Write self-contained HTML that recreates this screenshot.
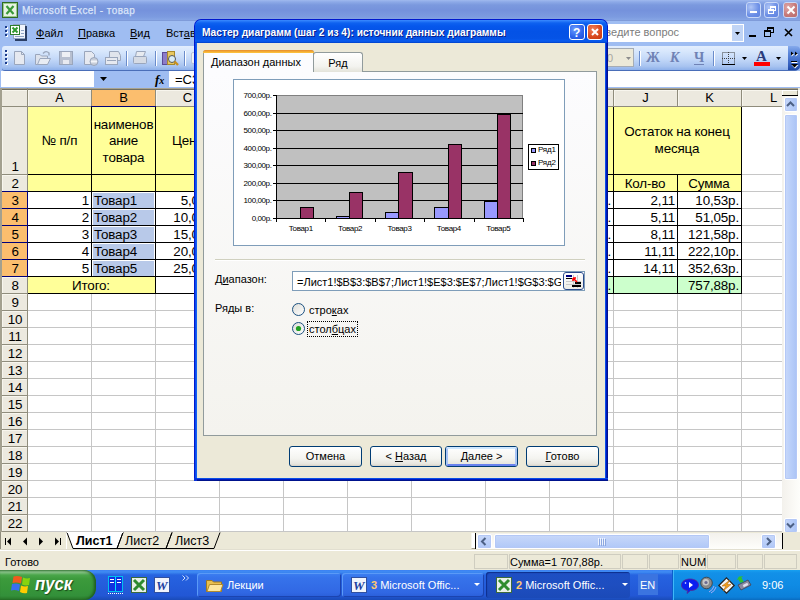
<!DOCTYPE html>
<html><head><meta charset="utf-8">
<style>
*{margin:0;padding:0;box-sizing:border-box}
html,body{width:800px;height:600px;overflow:hidden;background:#ECE9D8;font-family:"Liberation Sans",sans-serif}
.a{position:absolute}
.t{position:absolute;white-space:nowrap;line-height:1}
svg{position:absolute;overflow:visible}
</style></head><body>
<div class="a" style="left:0px;top:0px;width:800px;height:21px;background:linear-gradient(#A0BAEE 0,#8CA9E7 2px,#7B99DE 5px,#7592DC 50%,#7C9BE0 80%,#86A5E5 95%,#6F8AD6 100%)"></div>
<div class="t" style="left:22px;top:5.54px;font-size:10px;color:#DCE6FA;letter-spacing:0.45px;-webkit-text-stroke:0.25px #DCE6FA">Microsoft Excel - товар</div>
<div class="a" style="left:0px;top:20px;width:800px;height:68px;background:#9FBDF2"></div>
<div class="a" style="left:0px;top:20px;width:800px;height:1px;background:#7F9BD9"></div>
<div class="a" style="left:746px;top:2px;width:15px;height:16px;border:1px solid #C8D8F8;border-radius:3px;background:radial-gradient(circle at 30% 30%,#B0C6F6,#6C8FE6 60%,#5D82E0)"></div>
<div class="a" style="left:764px;top:2px;width:15px;height:16px;border:1px solid #C8D8F8;border-radius:3px;background:radial-gradient(circle at 30% 30%,#B0C6F6,#6C8FE6 60%,#5D82E0)"></div>
<div class="a" style="left:783px;top:2px;width:15px;height:16px;border:1px solid #C8D8F8;border-radius:3px;background:radial-gradient(circle at 30% 30%,#E0A8A8,#C57878 60%,#B86C6C)"></div>
<div class="a" style="left:750px;top:11px;width:7px;height:2px;background:#fff"></div>
<svg style="left:767px;top:5px" width="10" height="10"><rect x="3.5" y="1.5" width="5" height="4" fill="none" stroke="#fff"/><rect x="1.5" y="4.5" width="5" height="4" fill="#7C9CE8" stroke="#fff"/><line x1="3" x2="9" y1="2" y2="2" stroke="#fff" stroke-width="2"/><line x1="1" x2="7" y1="5" y2="5" stroke="#fff" stroke-width="2"/></svg>
<svg style="left:786px;top:5px" width="10" height="10"><path d="M1.5 1.5L8.5 8.5M8.5 1.5L1.5 8.5" stroke="#fff" stroke-width="2"/></svg>
<svg style="left:2px;top:2px" width="17" height="17"><rect x="0.5" y="0.5" width="15" height="15" fill="#E8F2E4" stroke="#2F6A25"/><rect x="1.5" y="1.5" width="13" height="13" fill="none" stroke="#9ACB8A"/><path d="M4.5 4L11.5 12M11.5 4L4.5 12" stroke="#3A9A3A" stroke-width="2.2"/></svg>
<div class="a" style="left:5px;top:26px;width:2px;height:2px;background:#1B3C8C;box-shadow:1px 1px 0 #fff"></div>
<div class="a" style="left:5px;top:30px;width:2px;height:2px;background:#1B3C8C;box-shadow:1px 1px 0 #fff"></div>
<div class="a" style="left:5px;top:34px;width:2px;height:2px;background:#1B3C8C;box-shadow:1px 1px 0 #fff"></div>
<svg style="left:10px;top:24px" width="18" height="17"><rect x="3.5" y="0.5" width="12" height="14" fill="#F0F4FC" stroke="#8FA3C4"/><rect x="15" y="2" width="2" height="14" fill="#2B3E64"/><rect x="5" y="15" width="12" height="2" fill="#2B3E64"/><rect x="0.5" y="1.5" width="9" height="9" fill="#fff" stroke="#2E7D2E"/><path d="M2.5 3.5L7.5 8.5M7.5 3.5L2.5 8.5" stroke="#2E9A2E" stroke-width="2"/><line x1="11" x2="14" y1="6.5" y2="6.5" stroke="#8FA3C4"/><line x1="11" x2="14" y1="9.5" y2="9.5" stroke="#8FA3C4"/><line x1="5" x2="14" y1="12.5" y2="12.5" stroke="#8FA3C4"/></svg>
<div class="t" style="left:36px;top:27.69px;font-size:11px;color:#000"><u>Ф</u>айл</div>
<div class="t" style="left:78px;top:27.69px;font-size:11px;color:#000"><u>П</u>равка</div>
<div class="t" style="left:130px;top:27.69px;font-size:11px;color:#000"><u>В</u>ид</div>
<div class="t" style="left:166px;top:27.69px;font-size:11px;color:#000">Вст<u>а</u>вка</div>
<div class="a" style="left:560px;top:24px;width:184px;height:18px;background:#fff;border:1px solid #fff"></div>
<div class="a" style="left:732px;top:25px;width:11px;height:16px;background:#C1D5F6"></div>
<svg style="left:735px;top:32px" width="6" height="4"><path d="M0 0H5L2.5 3Z" fill="#000"/></svg>
<div class="t" style="left:598px;top:26.69px;font-size:11px;color:#7C7C7C">Введите вопрос</div>
<div class="a" style="left:749px;top:35px;width:7px;height:2px;background:#000"></div>
<svg style="left:764px;top:27px" width="11" height="11"><rect x="3.5" y="0.5" width="6" height="5" fill="none" stroke="#000"/><line x1="3" x2="10" y1="1.5" y2="1.5" stroke="#000"/><rect x="0.5" y="3.5" width="6" height="6" fill="#A6C3F0" stroke="#000"/><line x1="0" x2="7" y1="4.5" y2="4.5" stroke="#000"/></svg>
<svg style="left:784px;top:28px" width="10" height="10"><path d="M1 1L8 8M8 1L1 8" stroke="#000" stroke-width="1.6"/></svg>
<div class="a" style="left:2px;top:46px;width:620px;height:24px;border-radius:3px 0 0 3px;background:linear-gradient(#E3EEFE 0,#D6E6FC 25%,#C3D8F8 55%,#A7C3F0 85%,#8DB0EA 100%);box-shadow:0 1px 0 #4A6EB8"></div>
<div class="a" style="left:600px;top:46px;width:198px;height:24px;border-radius:0 3px 3px 0;background:linear-gradient(#E3EEFE 0,#D6E6FC 25%,#C3D8F8 55%,#A7C3F0 85%,#8DB0EA 100%);box-shadow:0 1px 0 #4A6EB8"></div>
<div class="a" style="left:5px;top:50px;width:2px;height:2px;background:#1B3C8C;box-shadow:1px 1px 0 #fff"></div>
<div class="a" style="left:5px;top:54px;width:2px;height:2px;background:#1B3C8C;box-shadow:1px 1px 0 #fff"></div>
<div class="a" style="left:5px;top:58px;width:2px;height:2px;background:#1B3C8C;box-shadow:1px 1px 0 #fff"></div>
<div class="a" style="left:5px;top:62px;width:2px;height:2px;background:#1B3C8C;box-shadow:1px 1px 0 #fff"></div>
<svg style="left:13px;top:50px" width="14" height="16"><path d="M1.5 1.5H8.5L11.5 4.5V14.5H1.5Z" fill="#E6E9F0" stroke="#9AA6BC"/><path d="M8.5 1.5V4.5H11.5" fill="none" stroke="#9AA6BC"/></svg>
<svg style="left:34px;top:50px" width="18" height="16"><path d="M1.5 4.5H6L7.5 6H13.5V14.5H1.5Z" fill="#DDE2EC" stroke="#9AA6BC"/><path d="M3.5 14.5L6 8.5H16.5L13.5 14.5Z" fill="#E8ECF3" stroke="#9AA6BC"/><path d="M9 3.5Q12 0 15 3L15 5.5" fill="none" stroke="#9AA6BC" stroke-width="1.4"/></svg>
<svg style="left:58px;top:50px" width="16" height="16"><rect x="1.5" y="1.5" width="13" height="13" fill="#B8C0D0" stroke="#9AA6BC"/><rect x="4" y="2" width="8" height="5" fill="#EEF0F4"/><rect x="5" y="10" width="6" height="4" fill="#E8EAF0"/></svg>
<svg style="left:83px;top:50px" width="16" height="16"><path d="M1.5 1.5H8.5L11.5 4.5V14.5H1.5Z" fill="#E6E9F0" stroke="#9AA6BC"/><circle cx="11" cy="11.5" r="4" fill="#C8CED9" stroke="#9AA6BC"/><rect x="8" y="10.5" width="6" height="2" fill="#F2F4F8"/></svg>
<svg style="left:104px;top:50px" width="18" height="16"><path d="M5.5 1.5H14.5L16.5 5.5V10.5H5.5Z" fill="#E0E4EC" stroke="#9AA6BC"/><rect x="1.5" y="7.5" width="12" height="7" fill="#E6E9F0" stroke="#9AA6BC"/><line x1="3" x2="12" y1="10.5" y2="10.5" stroke="#9AA6BC"/></svg>
<div class="a" style="left:126px;top:51px;width:1px;height:15px;background:#6A8CCB;box-shadow:1px 0 0 #fff"></div>
<svg style="left:132px;top:50px" width="16" height="16"><path d="M4.5 1.5H13.5L11.5 6.5H3.5Z" fill="#E8EBF0" stroke="#9AA6BC"/><rect x="1.5" y="6.5" width="13" height="7" rx="1" fill="#D6DBE4" stroke="#9AA6BC"/></svg>
<div class="a" style="left:155px;top:51px;width:1px;height:15px;background:#6A8CCB;box-shadow:1px 0 0 #fff"></div>
<svg style="left:162px;top:50px" width="18" height="17"><rect x="0.5" y="2.5" width="5" height="12" fill="#8C7CC8" stroke="#5A4A98"/><rect x="5.5" y="1.5" width="7" height="13" fill="#E8C860" stroke="#A88A2C"/><circle cx="10" cy="9" r="3.5" fill="#D8ECF8" stroke="#555"/><path d="M12.5 11.5L16 15" stroke="#C89020" stroke-width="2.4"/></svg>
<div class="a" style="left:184px;top:51px;width:1px;height:15px;background:#6A8CCB;box-shadow:1px 0 0 #fff"></div>
<div class="a" style="left:191px;top:52px;width:6px;height:12px;border:1px solid #B8C2D4;border-radius:2px;background:linear-gradient(90deg,#F4F6FA,#DDE2EA)"></div>
<div class="a" style="left:600px;top:48px;width:34px;height:19px;background:#ECE9D8;border:1px solid #A5ACB5"></div>
<svg style="left:626px;top:57px" width="6" height="4"><path d="M0 0H5L2.5 3Z" fill="#8C8C8C"/></svg>
<div class="t" style="left:601px;top:52.69px;font-size:11px;color:#A8A8A0">10</div>
<div class="a" style="left:639px;top:51px;width:1px;height:15px;background:#6A8CCB;box-shadow:1px 0 0 #fff"></div>
<div class="t" style="left:646px;top:51px;font-family:'Liberation Serif',serif;font-size:14px;font-weight:bold;color:#6F82B5">Ж</div>
<div class="t" style="left:670px;top:51px;font-family:'Liberation Serif',serif;font-size:14px;font-weight:bold;font-style:italic;color:#6F82B5">К</div>
<div class="t" style="left:694px;top:51px;font-family:'Liberation Serif',serif;font-size:14px;font-weight:bold;color:#6F82B5">Ч</div>
<div class="a" style="left:694px;top:64px;width:10px;height:1px;background:#6F82B5"></div>
<div class="a" style="left:713px;top:51px;width:1px;height:15px;background:#6A8CCB;box-shadow:1px 0 0 #fff"></div>
<svg style="left:722px;top:52px" width="14" height="14"><g stroke="#404040" stroke-dasharray="1 1" fill="none"><rect x="0.5" y="0.5" width="12" height="12"/><line x1="6.5" x2="6.5" y1="0" y2="13"/><line x1="0" x2="13" y1="6.5" y2="6.5"/></g><line x1="0" x2="13" y1="12.5" y2="12.5" stroke="#000"/></svg>
<svg style="left:742px;top:57px" width="6" height="4"><path d="M0 0H5L2.5 3Z" fill="#000"/></svg>
<div class="t" style="left:756px;top:49px;font-family:'Liberation Serif',serif;font-size:15px;font-weight:bold;color:#2A3D7C">A</div>
<div class="a" style="left:754px;top:62px;width:16px;height:4px;background:#F00"></div>
<svg style="left:776px;top:57px" width="6" height="4"><path d="M0 0H5L2.5 3Z" fill="#000"/></svg>
<div class="a" style="left:788px;top:46px;width:12px;height:24px;border-radius:0 4px 4px 0;background:linear-gradient(#86AAEC,#5A86DA 30%,#3A66C4 70%,#1E48A6)"></div>
<svg style="left:790px;top:50px" width="10" height="18"><g fill="#fff"><path d="M1.5 2.5L4 4.5L1.5 6.5Z"/><path d="M5.5 2.5L8 4.5L5.5 6.5Z"/><rect x="1.5" y="12" width="6" height="1"/><path d="M1.5 15H8.5L5 18.5Z"/></g><g fill="#000"><path d="M1 1.5L3.5 3.5L1 5.5Z"/><path d="M5 1.5L7.5 3.5L5 5.5Z"/><rect x="1" y="11" width="6" height="1"/><path d="M1 14H8L4.5 17.5Z"/></g></svg>
<div class="a" style="left:1px;top:71px;width:93px;height:16px;background:#fff"></div>
<div class="t" style="left:2.0px;top:73px;width:90px;text-align:center;font-size:13px;color:#000">G3</div>
<svg style="left:100px;top:77px" width="8" height="5"><path d="M0 0H7L3.5 4Z" fill="#000"/></svg>
<div class="t" style="left:155px;top:73px;font-family:'Liberation Serif',serif;font-size:13px;font-style:italic;font-weight:bold;color:#000">f<span style="font-size:10px">x</span></div>
<div class="a" style="left:169px;top:71px;width:631px;height:16px;background:#fff"></div>
<div class="t" style="left:175px;top:73.0px;font-size:13px;color:#000">=C3</div>
<div class="a" style="left:0px;top:88px;width:798px;height:1px;background:#A9A38F"></div>
<div class="a" style="left:0px;top:89px;width:798px;height:1px;background:#716F62"></div>
<div class="a" style="left:0px;top:90px;width:782px;height:16px;background:#ECE9DF"></div>
<div class="a" style="left:0px;top:90px;width:782px;height:1px;background:#F8F6EE"></div>
<div class="a" style="left:0px;top:106px;width:782px;height:1px;background:#8F8C7C"></div>
<div class="a" style="left:28px;top:107px;width:754px;height:425px;background:#fff"></div>
<div class="a" style="left:91px;top:107px;width:1px;height:425px;background:#C6C6C6"></div>
<div class="a" style="left:155px;top:107px;width:1px;height:425px;background:#C6C6C6"></div>
<div class="a" style="left:219px;top:107px;width:1px;height:425px;background:#C6C6C6"></div>
<div class="a" style="left:283px;top:107px;width:1px;height:425px;background:#C6C6C6"></div>
<div class="a" style="left:347px;top:107px;width:1px;height:425px;background:#C6C6C6"></div>
<div class="a" style="left:411px;top:107px;width:1px;height:425px;background:#C6C6C6"></div>
<div class="a" style="left:485px;top:107px;width:1px;height:425px;background:#C6C6C6"></div>
<div class="a" style="left:549px;top:107px;width:1px;height:425px;background:#C6C6C6"></div>
<div class="a" style="left:613px;top:107px;width:1px;height:425px;background:#C6C6C6"></div>
<div class="a" style="left:677px;top:107px;width:1px;height:425px;background:#C6C6C6"></div>
<div class="a" style="left:741px;top:107px;width:1px;height:425px;background:#C6C6C6"></div>
<div class="a" style="left:28px;top:174px;width:754px;height:1px;background:#C6C6C6"></div>
<div class="a" style="left:28px;top:191px;width:754px;height:1px;background:#C6C6C6"></div>
<div class="a" style="left:28px;top:208px;width:754px;height:1px;background:#C6C6C6"></div>
<div class="a" style="left:28px;top:225px;width:754px;height:1px;background:#C6C6C6"></div>
<div class="a" style="left:28px;top:242px;width:754px;height:1px;background:#C6C6C6"></div>
<div class="a" style="left:28px;top:259px;width:754px;height:1px;background:#C6C6C6"></div>
<div class="a" style="left:28px;top:276px;width:754px;height:1px;background:#C6C6C6"></div>
<div class="a" style="left:28px;top:293px;width:754px;height:1px;background:#C6C6C6"></div>
<div class="a" style="left:28px;top:310px;width:754px;height:1px;background:#C6C6C6"></div>
<div class="a" style="left:28px;top:327px;width:754px;height:1px;background:#C6C6C6"></div>
<div class="a" style="left:28px;top:344px;width:754px;height:1px;background:#C6C6C6"></div>
<div class="a" style="left:28px;top:361px;width:754px;height:1px;background:#C6C6C6"></div>
<div class="a" style="left:28px;top:378px;width:754px;height:1px;background:#C6C6C6"></div>
<div class="a" style="left:28px;top:395px;width:754px;height:1px;background:#C6C6C6"></div>
<div class="a" style="left:28px;top:412px;width:754px;height:1px;background:#C6C6C6"></div>
<div class="a" style="left:28px;top:429px;width:754px;height:1px;background:#C6C6C6"></div>
<div class="a" style="left:28px;top:446px;width:754px;height:1px;background:#C6C6C6"></div>
<div class="a" style="left:28px;top:463px;width:754px;height:1px;background:#C6C6C6"></div>
<div class="a" style="left:28px;top:480px;width:754px;height:1px;background:#C6C6C6"></div>
<div class="a" style="left:28px;top:497px;width:754px;height:1px;background:#C6C6C6"></div>
<div class="a" style="left:28px;top:514px;width:754px;height:1px;background:#C6C6C6"></div>
<div class="a" style="left:28px;top:531px;width:754px;height:1px;background:#C6C6C6"></div>
<div class="a" style="left:1px;top:107px;width:26px;height:425px;background:#ECE9DF"></div>
<div class="a" style="left:2px;top:107px;width:1px;height:425px;background:#F8F6EE"></div>
<div class="a" style="left:0px;top:88px;width:2px;height:444px;background:#A3A08F"></div>
<div class="a" style="left:27px;top:88px;width:1px;height:444px;background:#8F8C7C"></div>
<div class="a" style="left:2px;top:174px;width:25px;height:1px;background:#8F8C7C"></div>
<div class="a" style="left:3px;top:175px;width:24px;height:1px;background:#F8F6EE"></div>
<div class="a" style="left:2px;top:191px;width:25px;height:1px;background:#8F8C7C"></div>
<div class="a" style="left:3px;top:192px;width:24px;height:1px;background:#F8F6EE"></div>
<div class="a" style="left:2px;top:208px;width:25px;height:1px;background:#8F8C7C"></div>
<div class="a" style="left:3px;top:209px;width:24px;height:1px;background:#F8F6EE"></div>
<div class="a" style="left:2px;top:225px;width:25px;height:1px;background:#8F8C7C"></div>
<div class="a" style="left:3px;top:226px;width:24px;height:1px;background:#F8F6EE"></div>
<div class="a" style="left:2px;top:242px;width:25px;height:1px;background:#8F8C7C"></div>
<div class="a" style="left:3px;top:243px;width:24px;height:1px;background:#F8F6EE"></div>
<div class="a" style="left:2px;top:259px;width:25px;height:1px;background:#8F8C7C"></div>
<div class="a" style="left:3px;top:260px;width:24px;height:1px;background:#F8F6EE"></div>
<div class="a" style="left:2px;top:276px;width:25px;height:1px;background:#8F8C7C"></div>
<div class="a" style="left:3px;top:277px;width:24px;height:1px;background:#F8F6EE"></div>
<div class="a" style="left:2px;top:293px;width:25px;height:1px;background:#8F8C7C"></div>
<div class="a" style="left:3px;top:294px;width:24px;height:1px;background:#F8F6EE"></div>
<div class="a" style="left:2px;top:310px;width:25px;height:1px;background:#8F8C7C"></div>
<div class="a" style="left:3px;top:311px;width:24px;height:1px;background:#F8F6EE"></div>
<div class="a" style="left:2px;top:327px;width:25px;height:1px;background:#8F8C7C"></div>
<div class="a" style="left:3px;top:328px;width:24px;height:1px;background:#F8F6EE"></div>
<div class="a" style="left:2px;top:344px;width:25px;height:1px;background:#8F8C7C"></div>
<div class="a" style="left:3px;top:345px;width:24px;height:1px;background:#F8F6EE"></div>
<div class="a" style="left:2px;top:361px;width:25px;height:1px;background:#8F8C7C"></div>
<div class="a" style="left:3px;top:362px;width:24px;height:1px;background:#F8F6EE"></div>
<div class="a" style="left:2px;top:378px;width:25px;height:1px;background:#8F8C7C"></div>
<div class="a" style="left:3px;top:379px;width:24px;height:1px;background:#F8F6EE"></div>
<div class="a" style="left:2px;top:395px;width:25px;height:1px;background:#8F8C7C"></div>
<div class="a" style="left:3px;top:396px;width:24px;height:1px;background:#F8F6EE"></div>
<div class="a" style="left:2px;top:412px;width:25px;height:1px;background:#8F8C7C"></div>
<div class="a" style="left:3px;top:413px;width:24px;height:1px;background:#F8F6EE"></div>
<div class="a" style="left:2px;top:429px;width:25px;height:1px;background:#8F8C7C"></div>
<div class="a" style="left:3px;top:430px;width:24px;height:1px;background:#F8F6EE"></div>
<div class="a" style="left:2px;top:446px;width:25px;height:1px;background:#8F8C7C"></div>
<div class="a" style="left:3px;top:447px;width:24px;height:1px;background:#F8F6EE"></div>
<div class="a" style="left:2px;top:463px;width:25px;height:1px;background:#8F8C7C"></div>
<div class="a" style="left:3px;top:464px;width:24px;height:1px;background:#F8F6EE"></div>
<div class="a" style="left:2px;top:480px;width:25px;height:1px;background:#8F8C7C"></div>
<div class="a" style="left:3px;top:481px;width:24px;height:1px;background:#F8F6EE"></div>
<div class="a" style="left:2px;top:497px;width:25px;height:1px;background:#8F8C7C"></div>
<div class="a" style="left:3px;top:498px;width:24px;height:1px;background:#F8F6EE"></div>
<div class="a" style="left:2px;top:514px;width:25px;height:1px;background:#8F8C7C"></div>
<div class="a" style="left:3px;top:515px;width:24px;height:1px;background:#F8F6EE"></div>
<div class="a" style="left:2px;top:531px;width:25px;height:1px;background:#8F8C7C"></div>
<div class="a" style="left:3px;top:532px;width:24px;height:1px;background:#F8F6EE"></div>
<div class="a" style="left:27px;top:90px;width:1px;height:16px;background:#8F8C7C"></div>
<div class="a" style="left:28px;top:91px;width:1px;height:15px;background:#F8F6EE"></div>
<div class="a" style="left:91px;top:90px;width:1px;height:16px;background:#8F8C7C"></div>
<div class="a" style="left:92px;top:91px;width:1px;height:15px;background:#F8F6EE"></div>
<div class="a" style="left:155px;top:90px;width:1px;height:16px;background:#8F8C7C"></div>
<div class="a" style="left:156px;top:91px;width:1px;height:15px;background:#F8F6EE"></div>
<div class="a" style="left:219px;top:90px;width:1px;height:16px;background:#8F8C7C"></div>
<div class="a" style="left:220px;top:91px;width:1px;height:15px;background:#F8F6EE"></div>
<div class="a" style="left:283px;top:90px;width:1px;height:16px;background:#8F8C7C"></div>
<div class="a" style="left:284px;top:91px;width:1px;height:15px;background:#F8F6EE"></div>
<div class="a" style="left:347px;top:90px;width:1px;height:16px;background:#8F8C7C"></div>
<div class="a" style="left:348px;top:91px;width:1px;height:15px;background:#F8F6EE"></div>
<div class="a" style="left:411px;top:90px;width:1px;height:16px;background:#8F8C7C"></div>
<div class="a" style="left:412px;top:91px;width:1px;height:15px;background:#F8F6EE"></div>
<div class="a" style="left:485px;top:90px;width:1px;height:16px;background:#8F8C7C"></div>
<div class="a" style="left:486px;top:91px;width:1px;height:15px;background:#F8F6EE"></div>
<div class="a" style="left:549px;top:90px;width:1px;height:16px;background:#8F8C7C"></div>
<div class="a" style="left:550px;top:91px;width:1px;height:15px;background:#F8F6EE"></div>
<div class="a" style="left:613px;top:90px;width:1px;height:16px;background:#8F8C7C"></div>
<div class="a" style="left:614px;top:91px;width:1px;height:15px;background:#F8F6EE"></div>
<div class="a" style="left:677px;top:90px;width:1px;height:16px;background:#8F8C7C"></div>
<div class="a" style="left:678px;top:91px;width:1px;height:15px;background:#F8F6EE"></div>
<div class="a" style="left:741px;top:90px;width:1px;height:16px;background:#8F8C7C"></div>
<div class="a" style="left:742px;top:91px;width:1px;height:15px;background:#F8F6EE"></div>
<div class="t" style="left:-40.5px;top:91px;width:200px;text-align:center;font-size:13px;color:#000">A</div>
<div class="a" style="left:92px;top:90px;width:63px;height:16px;background:#FBBE6E"></div>
<div class="a" style="left:91px;top:106px;width:65px;height:1px;background:#00007A"></div>
<div class="t" style="left:23.5px;top:91px;width:200px;text-align:center;font-size:13px;color:#000">B</div>
<div class="t" style="left:87.5px;top:91px;width:200px;text-align:center;font-size:13px;color:#000">C</div>
<div class="t" style="left:151.5px;top:91px;width:200px;text-align:center;font-size:13px;color:#000">D</div>
<div class="t" style="left:215.5px;top:91px;width:200px;text-align:center;font-size:13px;color:#000">E</div>
<div class="t" style="left:279.5px;top:91px;width:200px;text-align:center;font-size:13px;color:#000">F</div>
<div class="t" style="left:348.5px;top:91px;width:200px;text-align:center;font-size:13px;color:#000">G</div>
<div class="t" style="left:417.5px;top:91px;width:200px;text-align:center;font-size:13px;color:#000">H</div>
<div class="t" style="left:481.5px;top:91px;width:200px;text-align:center;font-size:13px;color:#000">I</div>
<div class="t" style="left:545.5px;top:91px;width:200px;text-align:center;font-size:13px;color:#000">J</div>
<div class="t" style="left:609.5px;top:91px;width:200px;text-align:center;font-size:13px;color:#000">K</div>
<div class="t" style="left:673.5px;top:91px;width:200px;text-align:center;font-size:13px;color:#000">L</div>
<div class="t" style="left:2.0px;top:160px;width:26px;text-align:center;font-size:13.4px;color:#000;letter-spacing:-0.2px">1</div>
<div class="t" style="left:2.0px;top:177px;width:26px;text-align:center;font-size:13.4px;color:#000;letter-spacing:-0.2px">2</div>
<div class="a" style="left:2px;top:192px;width:25px;height:16px;background:#FBBE6E"></div>
<div class="t" style="left:2.0px;top:194px;width:26px;text-align:center;font-size:13.4px;color:#000;letter-spacing:-0.2px">3</div>
<div class="a" style="left:2px;top:209px;width:25px;height:16px;background:#FBBE6E"></div>
<div class="t" style="left:2.0px;top:211px;width:26px;text-align:center;font-size:13.4px;color:#000;letter-spacing:-0.2px">4</div>
<div class="a" style="left:2px;top:226px;width:25px;height:16px;background:#FBBE6E"></div>
<div class="t" style="left:2.0px;top:228px;width:26px;text-align:center;font-size:13.4px;color:#000;letter-spacing:-0.2px">5</div>
<div class="a" style="left:2px;top:243px;width:25px;height:16px;background:#FBBE6E"></div>
<div class="t" style="left:2.0px;top:245px;width:26px;text-align:center;font-size:13.4px;color:#000;letter-spacing:-0.2px">6</div>
<div class="a" style="left:2px;top:260px;width:25px;height:16px;background:#FBBE6E"></div>
<div class="t" style="left:2.0px;top:262px;width:26px;text-align:center;font-size:13.4px;color:#000;letter-spacing:-0.2px">7</div>
<div class="t" style="left:2.0px;top:279px;width:26px;text-align:center;font-size:13.4px;color:#000;letter-spacing:-0.2px">8</div>
<div class="t" style="left:2.0px;top:296px;width:26px;text-align:center;font-size:13.4px;color:#000;letter-spacing:-0.2px">9</div>
<div class="t" style="left:2.0px;top:313px;width:26px;text-align:center;font-size:13.4px;color:#000;letter-spacing:-0.2px">10</div>
<div class="t" style="left:2.0px;top:330px;width:26px;text-align:center;font-size:13.4px;color:#000;letter-spacing:-0.2px">11</div>
<div class="t" style="left:2.0px;top:347px;width:26px;text-align:center;font-size:13.4px;color:#000;letter-spacing:-0.2px">12</div>
<div class="t" style="left:2.0px;top:364px;width:26px;text-align:center;font-size:13.4px;color:#000;letter-spacing:-0.2px">13</div>
<div class="t" style="left:2.0px;top:381px;width:26px;text-align:center;font-size:13.4px;color:#000;letter-spacing:-0.2px">14</div>
<div class="t" style="left:2.0px;top:398px;width:26px;text-align:center;font-size:13.4px;color:#000;letter-spacing:-0.2px">15</div>
<div class="t" style="left:2.0px;top:415px;width:26px;text-align:center;font-size:13.4px;color:#000;letter-spacing:-0.2px">16</div>
<div class="t" style="left:2.0px;top:432px;width:26px;text-align:center;font-size:13.4px;color:#000;letter-spacing:-0.2px">17</div>
<div class="t" style="left:2.0px;top:449px;width:26px;text-align:center;font-size:13.4px;color:#000;letter-spacing:-0.2px">18</div>
<div class="t" style="left:2.0px;top:466px;width:26px;text-align:center;font-size:13.4px;color:#000;letter-spacing:-0.2px">19</div>
<div class="t" style="left:2.0px;top:483px;width:26px;text-align:center;font-size:13.4px;color:#000;letter-spacing:-0.2px">20</div>
<div class="t" style="left:2.0px;top:500px;width:26px;text-align:center;font-size:13.4px;color:#000;letter-spacing:-0.2px">21</div>
<div class="t" style="left:2.0px;top:517px;width:26px;text-align:center;font-size:13.4px;color:#000;letter-spacing:-0.2px">22</div>
<div class="a" style="left:27px;top:191px;width:1px;height:86px;background:#00007A"></div>
<div class="a" style="left:2px;top:191px;width:26px;height:1px;background:#00007A"></div>
<div class="a" style="left:2px;top:208px;width:26px;height:1px;background:#00007A"></div>
<div class="a" style="left:2px;top:225px;width:26px;height:1px;background:#00007A"></div>
<div class="a" style="left:2px;top:242px;width:26px;height:1px;background:#00007A"></div>
<div class="a" style="left:2px;top:259px;width:26px;height:1px;background:#00007A"></div>
<div class="a" style="left:2px;top:276px;width:26px;height:1px;background:#00007A"></div>
<div class="a" style="left:28px;top:107px;width:713px;height:67px;background:#FFFF99"></div>
<div class="a" style="left:28px;top:175px;width:713px;height:16px;background:#FFFF99"></div>
<div class="a" style="left:28px;top:277px;width:127px;height:16px;background:#FFFF99"></div>
<div class="a" style="left:613px;top:277px;width:128px;height:16px;background:#CCFFCC"></div>
<div class="a" style="left:608px;top:277px;width:5px;height:16px;background:#CCFFCC"></div>
<div class="a" style="left:93px;top:193px;width:61px;height:15px;background:#B8C9E9"></div>
<div class="a" style="left:93px;top:210px;width:61px;height:15px;background:#B8C9E9"></div>
<div class="a" style="left:93px;top:227px;width:61px;height:15px;background:#B8C9E9"></div>
<div class="a" style="left:93px;top:244px;width:61px;height:15px;background:#B8C9E9"></div>
<div class="a" style="left:93px;top:261px;width:61px;height:15px;background:#B8C9E9"></div>
<div class="a" style="left:28px;top:174px;width:713px;height:1px;background:#000"></div>
<div class="a" style="left:28px;top:191px;width:713px;height:1px;background:#000"></div>
<div class="a" style="left:28px;top:208px;width:713px;height:1px;background:#000"></div>
<div class="a" style="left:28px;top:225px;width:713px;height:1px;background:#000"></div>
<div class="a" style="left:28px;top:242px;width:713px;height:1px;background:#000"></div>
<div class="a" style="left:28px;top:259px;width:713px;height:1px;background:#000"></div>
<div class="a" style="left:28px;top:276px;width:713px;height:1px;background:#000"></div>
<div class="a" style="left:28px;top:293px;width:713px;height:1px;background:#000"></div>
<div class="a" style="left:91px;top:107px;width:1px;height:170px;background:#000"></div>
<div class="a" style="left:155px;top:107px;width:1px;height:187px;background:#000"></div>
<div class="a" style="left:613px;top:107px;width:1px;height:187px;background:#000"></div>
<div class="a" style="left:677px;top:175px;width:1px;height:119px;background:#000"></div>
<div class="a" style="left:741px;top:107px;width:1px;height:187px;background:#000"></div>
<div class="t" style="left:-40.5px;top:134px;width:200px;text-align:center;font-size:13.4px;color:#000;letter-spacing:-0.15px">№ п/п</div>
<div class="t" style="left:23.5px;top:117.5px;width:200px;text-align:center;font-size:13.4px;color:#000;letter-spacing:-0.15px">наименов</div>
<div class="t" style="left:23.5px;top:134px;width:200px;text-align:center;font-size:13.4px;color:#000;letter-spacing:-0.15px">ание</div>
<div class="t" style="left:23.5px;top:150.5px;width:200px;text-align:center;font-size:13.4px;color:#000;letter-spacing:-0.15px">товара</div>
<div class="t" style="left:172px;top:134px;font-size:13.4px;color:#000;letter-spacing:-0.15px">Цена</div>
<div class="t" style="left:-111px;top:194px;width:200px;text-align:right;font-size:13.4px;color:#000;letter-spacing:-0.15px">1</div>
<div class="t" style="left:94px;top:194px;font-size:13.4px;color:#000;letter-spacing:-0.15px">Товар1</div>
<div class="t" style="left:17px;top:194px;width:200px;text-align:right;font-size:13.4px;color:#000;letter-spacing:-0.15px">5,00р.</div>
<div class="t" style="left:475px;top:194px;width:200px;text-align:right;font-size:13.4px;color:#000;letter-spacing:-0.15px">2,11</div>
<div class="t" style="left:539px;top:194px;width:200px;text-align:right;font-size:13.4px;color:#000;letter-spacing:-0.15px">10,53р.</div>
<div class="t" style="left:-111px;top:211px;width:200px;text-align:right;font-size:13.4px;color:#000;letter-spacing:-0.15px">2</div>
<div class="t" style="left:94px;top:211px;font-size:13.4px;color:#000;letter-spacing:-0.15px">Товар2</div>
<div class="t" style="left:17px;top:211px;width:200px;text-align:right;font-size:13.4px;color:#000;letter-spacing:-0.15px">10,00р.</div>
<div class="t" style="left:475px;top:211px;width:200px;text-align:right;font-size:13.4px;color:#000;letter-spacing:-0.15px">5,11</div>
<div class="t" style="left:539px;top:211px;width:200px;text-align:right;font-size:13.4px;color:#000;letter-spacing:-0.15px">51,05р.</div>
<div class="t" style="left:-111px;top:228px;width:200px;text-align:right;font-size:13.4px;color:#000;letter-spacing:-0.15px">3</div>
<div class="t" style="left:94px;top:228px;font-size:13.4px;color:#000;letter-spacing:-0.15px">Товар3</div>
<div class="t" style="left:17px;top:228px;width:200px;text-align:right;font-size:13.4px;color:#000;letter-spacing:-0.15px">15,00р.</div>
<div class="t" style="left:475px;top:228px;width:200px;text-align:right;font-size:13.4px;color:#000;letter-spacing:-0.15px">8,11</div>
<div class="t" style="left:539px;top:228px;width:200px;text-align:right;font-size:13.4px;color:#000;letter-spacing:-0.15px">121,58р.</div>
<div class="t" style="left:-111px;top:245px;width:200px;text-align:right;font-size:13.4px;color:#000;letter-spacing:-0.15px">4</div>
<div class="t" style="left:94px;top:245px;font-size:13.4px;color:#000;letter-spacing:-0.15px">Товар4</div>
<div class="t" style="left:17px;top:245px;width:200px;text-align:right;font-size:13.4px;color:#000;letter-spacing:-0.15px">20,00р.</div>
<div class="t" style="left:475px;top:245px;width:200px;text-align:right;font-size:13.4px;color:#000;letter-spacing:-0.15px">11,11</div>
<div class="t" style="left:539px;top:245px;width:200px;text-align:right;font-size:13.4px;color:#000;letter-spacing:-0.15px">222,10р.</div>
<div class="t" style="left:-111px;top:262px;width:200px;text-align:right;font-size:13.4px;color:#000;letter-spacing:-0.15px">5</div>
<div class="t" style="left:94px;top:262px;font-size:13.4px;color:#000;letter-spacing:-0.15px">Товар5</div>
<div class="t" style="left:17px;top:262px;width:200px;text-align:right;font-size:13.4px;color:#000;letter-spacing:-0.15px">25,00р.</div>
<div class="t" style="left:475px;top:262px;width:200px;text-align:right;font-size:13.4px;color:#000;letter-spacing:-0.15px">14,11</div>
<div class="t" style="left:539px;top:262px;width:200px;text-align:right;font-size:13.4px;color:#000;letter-spacing:-0.15px">352,63р.</div>
<div class="t" style="left:-9.0px;top:279px;width:200px;text-align:center;font-size:13.4px;color:#000;letter-spacing:-0.15px">Итого:</div>
<div class="t" style="left:411px;top:194px;width:200px;text-align:right;font-size:13.4px;color:#000;letter-spacing:-0.15px">р.</div>
<div class="t" style="left:411px;top:211px;width:200px;text-align:right;font-size:13.4px;color:#000;letter-spacing:-0.15px">р.</div>
<div class="t" style="left:411px;top:228px;width:200px;text-align:right;font-size:13.4px;color:#000;letter-spacing:-0.15px">р.</div>
<div class="t" style="left:411px;top:245px;width:200px;text-align:right;font-size:13.4px;color:#000;letter-spacing:-0.15px">р.</div>
<div class="t" style="left:411px;top:262px;width:200px;text-align:right;font-size:13.4px;color:#000;letter-spacing:-0.15px">р.</div>
<div class="t" style="left:411px;top:279px;width:200px;text-align:right;font-size:13.4px;color:#000;letter-spacing:-0.15px">р.</div>
<div class="t" style="left:539px;top:279px;width:200px;text-align:right;font-size:13.4px;color:#000;letter-spacing:-0.15px">757,88р.</div>
<div class="t" style="left:577.0px;top:125px;width:200px;text-align:center;font-size:13.4px;color:#000;letter-spacing:-0.15px">Остаток на конец</div>
<div class="t" style="left:577.0px;top:141.5px;width:200px;text-align:center;font-size:13.4px;color:#000;letter-spacing:-0.15px">месяца</div>
<div class="t" style="left:545.0px;top:177px;width:200px;text-align:center;font-size:13.4px;color:#000;letter-spacing:-0.15px">Кол-во</div>
<div class="t" style="left:609.0px;top:177px;width:200px;text-align:center;font-size:13.4px;color:#000;letter-spacing:-0.15px">Сумма</div>
<div class="a" style="left:782px;top:90px;width:18px;height:442px;background:linear-gradient(90deg,#F3F1EC,#FEFEFB)"></div>
<div class="a" style="left:782px;top:90px;width:16px;height:5px;background:#ECE9D8;border:1px solid #fff;border-right-color:#8F8C7C;border-bottom:none"></div>
<div class="a" style="left:782px;top:95px;width:16px;height:1px;background:#000"></div>
<div class="a" style="left:784px;top:97px;width:14px;height:15px;border:1px solid #fff;border-radius:2px;background:linear-gradient(90deg,#C8D8FA,#B8CEF9 50%,#AAC3F5);box-shadow:inset 0 0 0 1px #B4C8F6"></div>
<svg style="left:786px;top:101px" width="10" height="7"><path d="M1 5L4.5 1.5L8 5" stroke="#4D6185" stroke-width="2" fill="none"/></svg>
<div class="a" style="left:784px;top:114px;width:14px;height:366px;border:1px solid #fff;border-radius:2px;background:linear-gradient(90deg,#C8D8FA,#B8CEF9 50%,#AAC3F5);box-shadow:inset 0 0 0 1px #B4C8F6"></div>
<div class="a" style="left:784px;top:518px;width:14px;height:15px;border:1px solid #fff;border-radius:2px;background:linear-gradient(90deg,#C8D8FA,#B8CEF9 50%,#AAC3F5);box-shadow:inset 0 0 0 1px #B4C8F6"></div>
<svg style="left:786px;top:522px" width="10" height="7"><path d="M1 1.5L4.5 5L8 1.5" stroke="#4D6185" stroke-width="2" fill="none"/></svg>
<div class="a" style="left:0px;top:532px;width:800px;height:18px;background:#ECE9D8"></div>
<div class="a" style="left:0px;top:549px;width:800px;height:1px;background:#E2DFD0"></div>
<div class="a" style="left:0px;top:532px;width:1px;height:17px;background:#8F8C7C"></div>
<svg style="left:3px;top:537px" width="64" height="10"><rect x="2" y="1" width="1" height="7" fill="#000"/><path d="M8 0.5V8.5L4 4.5Z" fill="#000"/><path d="M24 0.5V8.5L20 4.5Z" fill="#000"/><path d="M36 0.5V8.5L40 4.5Z" fill="#000"/><path d="M52 0.5V8.5L56 4.5Z" fill="#000"/><rect x="57" y="1" width="1" height="7" fill="#000"/></svg>
<div class="a" style="left:66px;top:533px;width:1px;height:16px;background:#fff"></div>
<svg style="left:60px;top:532px" width="170" height="18"><path d="M7 0.5L13 16.5H57L63 0.5" fill="#fff" stroke="none"/><path d="M63 0.5L57 16.5H106L112 0.5" fill="none" stroke="#000"/><path d="M112 0.5L106 16.5H154L160 0.5" fill="none" stroke="#000"/><path d="M7 0.5L13 16.5H57L63 0.5" fill="none" stroke="#000"/><line x1="7" x2="63" y1="0.5" y2="0.5" stroke="#fff"/></svg>
<div class="t" style="left:76px;top:535.42px;font-size:12.5px;font-weight:bold;color:#000">Лист1</div>
<div class="t" style="left:125px;top:535.42px;font-size:12.5px;color:#000">Лист2</div>
<div class="t" style="left:175px;top:535.42px;font-size:12.5px;color:#000">Лист3</div>
<div class="a" style="left:471px;top:533px;width:4px;height:16px;background:#fff;border-bottom:1px solid #A9A38F;border-left:1px solid #F8F6EE"></div>
<div class="a" style="left:475px;top:533px;width:1px;height:16px;background:#000"></div>
<div class="a" style="left:476px;top:533px;width:306px;height:16px;background:linear-gradient(#F3F1EC,#FEFEFB)"></div>
<div class="a" style="left:477px;top:534px;width:15px;height:15px;border:1px solid #fff;border-radius:2px;background:linear-gradient(#C8D8FA,#B0C8F7);box-shadow:inset 0 0 0 1px #B4C8F6"></div>
<svg style="left:480px;top:537px" width="8" height="10"><path d="M5.5 1L2 4.5L5.5 8" stroke="#4D6185" stroke-width="2" fill="none"/></svg>
<div class="a" style="left:494px;top:534px;width:216px;height:15px;border:1px solid #fff;border-radius:2px;background:linear-gradient(#C8D8FA,#B0C8F7);box-shadow:inset 0 0 0 1px #B4C8F6"></div>
<svg style="left:598px;top:538px" width="8" height="7"><g stroke="#EEF3FE"><line x1="0.5" x2="0.5" y1="0" y2="7"/><line x1="2.5" x2="2.5" y1="0" y2="7"/><line x1="4.5" x2="4.5" y1="0" y2="7"/><line x1="6.5" x2="6.5" y1="0" y2="7"/></g><g stroke="#8CA8E0"><line x1="1.5" x2="1.5" y1="1" y2="8"/><line x1="3.5" x2="3.5" y1="1" y2="8"/><line x1="5.5" x2="5.5" y1="1" y2="8"/><line x1="7.5" x2="7.5" y1="1" y2="8"/></g></svg>
<div class="a" style="left:761px;top:534px;width:15px;height:15px;border:1px solid #fff;border-radius:2px;background:linear-gradient(#C8D8FA,#B0C8F7);box-shadow:inset 0 0 0 1px #B4C8F6"></div>
<svg style="left:765px;top:537px" width="8" height="10"><path d="M2 1L5.5 4.5L2 8" stroke="#4D6185" stroke-width="2" fill="none"/></svg>
<div class="a" style="left:782px;top:533px;width:18px;height:17px;background:#ECE9D8"></div>
<div class="a" style="left:782px;top:533px;width:1px;height:16px;background:#000"></div>
<div class="a" style="left:0px;top:550px;width:800px;height:1px;background:#fff"></div>
<div class="a" style="left:0px;top:551px;width:800px;height:19px;background:#ECE9D8"></div>
<div class="t" style="left:5px;top:556.69px;font-size:11px;color:#000">Готово</div>
<div class="a" style="left:474px;top:554px;width:34px;height:15px;border:1px solid #CFCDC0"></div>
<div class="a" style="left:509px;top:554px;width:112px;height:15px;border:1px solid #CFCDC0"></div>
<div class="a" style="left:622px;top:554px;width:26px;height:15px;border:1px solid #CFCDC0"></div>
<div class="a" style="left:649px;top:554px;width:30px;height:15px;border:1px solid #CFCDC0"></div>
<div class="a" style="left:680px;top:554px;width:26px;height:15px;border:1px solid #CFCDC0"></div>
<div class="a" style="left:707px;top:554px;width:29px;height:15px;border:1px solid #CFCDC0"></div>
<div class="a" style="left:737px;top:554px;width:26px;height:15px;border:1px solid #CFCDC0"></div>
<div class="a" style="left:764px;top:554px;width:33px;height:15px;border:1px solid #CFCDC0"></div>
<div class="t" style="left:510px;top:556.69px;font-size:11px;color:#000">Сумма=1 707,88р.</div>
<div class="t" style="left:681px;top:556.69px;font-size:11px;color:#000">NUM</div>
<div class="a" style="left:194px;top:19px;width:414px;height:462px;background:#0019CF;border-radius:7px 7px 0 0"></div>
<div class="a" style="left:195px;top:20px;width:412px;height:460px;background:linear-gradient(90deg,#0842E8,#166AF7 2px,#0855E6 4px);border-radius:6px 6px 0 0"></div>
<div class="a" style="left:605px;top:43px;width:3px;height:438px;background:linear-gradient(90deg,#0A4FE5 0,#0A4FE5 1px,#0019C0 1px,#0019C0 2px,#00138C 2px)"></div>
<div class="a" style="left:195px;top:20px;width:412px;height:23px;border-radius:6px 6px 0 0;background:linear-gradient(#3B8CFF 0,#2B7CFA 1px,#0E62F0 3px,#0657EC 6px,#0452E6 50%,#0553E6 80%,#0A5CF0 92%,#0040C8 100%)"></div>
<div class="t" style="left:202px;top:28.37px;font-size:10.2px;font-weight:bold;color:#fff;text-shadow:1px 1px 0 #0A1E8A">Мастер диаграмм (шаг 2 из 4): источник данных диаграммы</div>
<div class="a" style="left:197px;top:43px;width:408px;height:435px;background:#ECE9D8"></div>
<div class="a" style="left:197px;top:478px;width:411px;height:3px;background:linear-gradient(#0A4FE5 0,#0A4FE5 1px,#0019C0 1px,#0019C0 2px,#00138C 2px)"></div>
<div class="a" style="left:194px;top:478px;width:3px;height:3px;background:#0831D9"></div>
<div class="a" style="left:569px;top:24px;width:16px;height:16px;border:1px solid #fff;border-radius:3px;background:radial-gradient(circle at 35% 30%,#6A9BFF,#2C62EA 60%,#1D4FD8)"></div>
<div class="t" style="left:573px;top:26.84px;font-size:12px;font-weight:bold;color:#fff">?</div>
<div class="a" style="left:587px;top:24px;width:16px;height:16px;border:1px solid #fff;border-radius:3px;background:radial-gradient(circle at 35% 30%,#F0805A,#D8471C 60%,#C23A12)"></div>
<svg style="left:590px;top:27px" width="10" height="10"><path d="M2 2L8 8M8 2L2 8" stroke="#fff" stroke-width="2"/></svg>
<div class="a" style="left:203px;top:71px;width:394px;height:365px;border:1px solid #919B9C;border-top-color:#919B9C;background:linear-gradient(#FCFCFE,#F4F3EE)"></div>
<div class="a" style="left:313px;top:52px;width:50px;height:20px;border:1px solid #919B9C;border-bottom:none;border-radius:3px 3px 0 0;background:linear-gradient(#FFFFFF,#F3F3EF 70%,#E4E3DA)"></div>
<div class="t" style="left:313.0px;top:57.69px;width:50px;text-align:center;font-size:11px;color:#000">Ряд</div>
<div class="a" style="left:203px;top:50px;width:111px;height:22px;border:1px solid #919B9C;border-bottom:none;border-radius:3px 3px 0 0;background:#FCFCFE"></div>
<div class="a" style="left:203px;top:50px;width:111px;height:3px;border-radius:3px 3px 0 0;background:linear-gradient(#E68B2C,#FFC73C)"></div>
<div class="t" style="left:211px;top:56.69px;font-size:11px;color:#000">Диапазон данных</div>
<div class="a" style="left:233px;top:79px;width:332px;height:167px;border:1px solid #7F9DB9;background:#fff"></div>
<svg style="left:0;top:0" width="800" height="600">
<rect x="276.5" y="95.5" width="246" height="123" fill="#C0C0C0" stroke="#808080" stroke-width="1"/>
<line x1="276" x2="523" y1="113.5" y2="113.5" stroke="#000"/>
<line x1="276" x2="523" y1="130.5" y2="130.5" stroke="#000"/>
<line x1="276" x2="523" y1="148.5" y2="148.5" stroke="#000"/>
<line x1="276" x2="523" y1="165.5" y2="165.5" stroke="#000"/>
<line x1="276" x2="523" y1="183.5" y2="183.5" stroke="#000"/>
<line x1="276" x2="523" y1="200.5" y2="200.5" stroke="#000"/>
<line x1="276" x2="523" y1="218.5" y2="218.5" stroke="#000"/>
<line x1="276.5" x2="276.5" y1="95" y2="219" stroke="#000"/>
<line x1="273" x2="277" y1="95.5" y2="95.5" stroke="#000"/>
<line x1="273" x2="277" y1="113.5" y2="113.5" stroke="#000"/>
<line x1="273" x2="277" y1="130.5" y2="130.5" stroke="#000"/>
<line x1="273" x2="277" y1="148.5" y2="148.5" stroke="#000"/>
<line x1="273" x2="277" y1="165.5" y2="165.5" stroke="#000"/>
<line x1="273" x2="277" y1="183.5" y2="183.5" stroke="#000"/>
<line x1="273" x2="277" y1="200.5" y2="200.5" stroke="#000"/>
<line x1="273" x2="277" y1="218.5" y2="218.5" stroke="#000"/>
<line x1="276.5" x2="276.5" y1="218" y2="222" stroke="#000"/>
<line x1="325.5" x2="325.5" y1="218" y2="222" stroke="#000"/>
<line x1="375.5" x2="375.5" y1="218" y2="222" stroke="#000"/>
<line x1="424.5" x2="424.5" y1="218" y2="222" stroke="#000"/>
<line x1="474.5" x2="474.5" y1="218" y2="222" stroke="#000"/>
<line x1="523.5" x2="523.5" y1="218" y2="222" stroke="#000"/>
<rect x="300.5" y="207.5" width="13" height="11" fill="#993366" stroke="#000"/>
<rect x="336.5" y="216.5" width="13" height="2" fill="#9999FF" stroke="#000"/>
<rect x="349.5" y="192.5" width="13" height="26" fill="#993366" stroke="#000"/>
<rect x="385.5" y="212.5" width="13" height="6" fill="#9999FF" stroke="#000"/>
<rect x="398.5" y="172.5" width="14" height="46" fill="#993366" stroke="#000"/>
<rect x="434.5" y="207.5" width="14" height="11" fill="#9999FF" stroke="#000"/>
<rect x="448.5" y="144.5" width="13" height="74" fill="#993366" stroke="#000"/>
<rect x="484.5" y="201.5" width="13" height="17" fill="#9999FF" stroke="#000"/>
<rect x="497.5" y="114.5" width="13" height="104" fill="#993366" stroke="#000"/>
<rect x="528.5" y="144.5" width="30" height="25" fill="#fff" stroke="#000"/>
<rect x="531.5" y="148.5" width="4" height="4" fill="#9999FF" stroke="#000"/>
<rect x="531.5" y="161.5" width="4" height="4" fill="#993366" stroke="#000"/>
</svg>
<div class="t" style="left:71.5px;top:91.73px;width:200px;text-align:right;font-size:8px;color:#000;letter-spacing:-0.4px">700,00р.</div>
<div class="t" style="left:71.5px;top:109.73px;width:200px;text-align:right;font-size:8px;color:#000;letter-spacing:-0.4px">600,00р.</div>
<div class="t" style="left:71.5px;top:126.73px;width:200px;text-align:right;font-size:8px;color:#000;letter-spacing:-0.4px">500,00р.</div>
<div class="t" style="left:71.5px;top:144.73px;width:200px;text-align:right;font-size:8px;color:#000;letter-spacing:-0.4px">400,00р.</div>
<div class="t" style="left:71.5px;top:161.73px;width:200px;text-align:right;font-size:8px;color:#000;letter-spacing:-0.4px">300,00р.</div>
<div class="t" style="left:71.5px;top:179.73px;width:200px;text-align:right;font-size:8px;color:#000;letter-spacing:-0.4px">200,00р.</div>
<div class="t" style="left:71.5px;top:196.73px;width:200px;text-align:right;font-size:8px;color:#000;letter-spacing:-0.4px">100,00р.</div>
<div class="t" style="left:71.5px;top:214.73px;width:200px;text-align:right;font-size:8px;color:#000;letter-spacing:-0.4px">0,00р.</div>
<div class="t" style="left:270.7px;top:225.23px;width:60px;text-align:center;font-size:8px;color:#000;letter-spacing:-0.35px">Товар1</div>
<div class="t" style="left:320.09999999999997px;top:225.23px;width:60px;text-align:center;font-size:8px;color:#000;letter-spacing:-0.35px">Товар2</div>
<div class="t" style="left:369.5px;top:225.23px;width:60px;text-align:center;font-size:8px;color:#000;letter-spacing:-0.35px">Товар3</div>
<div class="t" style="left:418.9px;top:225.23px;width:60px;text-align:center;font-size:8px;color:#000;letter-spacing:-0.35px">Товар4</div>
<div class="t" style="left:468.3px;top:225.23px;width:60px;text-align:center;font-size:8px;color:#000;letter-spacing:-0.35px">Товар5</div>
<div class="t" style="left:538px;top:146.23px;font-size:8px;color:#000;letter-spacing:-0.2px">Ряд1</div>
<div class="t" style="left:538px;top:159.23px;font-size:8px;color:#000;letter-spacing:-0.2px">Ряд2</div>
<div class="a" style="left:215px;top:259px;width:370px;height:1px;background:#D0D0BF"></div>
<div class="a" style="left:215px;top:260px;width:370px;height:1px;background:#fff"></div>
<div class="t" style="left:215px;top:273.69px;font-size:11px;color:#000">Д<u>и</u>апазон:</div>
<div class="a" style="left:292px;top:271px;width:293px;height:20px;border:1px solid #7F9DB9;background:#fff"></div>
<div class="t" style="left:297px;top:276.69px;font-size:11px;color:#000">=Лист1!$B$3:$B$7;Лист1!$E$3:$E$7;Лист1!$G$3:$G</div>
<div class="a" style="left:561px;top:272px;width:23px;height:18px;background:#fff"></div>
<div class="a" style="left:563px;top:272px;width:21px;height:18px;border:1px solid #2C4B8C;border-radius:3px;background:linear-gradient(#FFFFFF,#ECEBE6)"></div>
<svg style="left:566px;top:275px" width="16" height="13"><rect x="0" y="0" width="6" height="2" fill="#000080"/><rect x="0" y="3" width="6" height="1" fill="#000"/><g stroke="#C8C8C8"><line x1="0" x2="15" y1="6.5" y2="6.5"/><line x1="0" x2="15" y1="9.5" y2="9.5"/><line x1="7.5" x2="7.5" y1="0" y2="13"/><line x1="11.5" x2="11.5" y1="0" y2="13"/></g><rect x="9" y="7" width="6" height="2" fill="#000"/><rect x="6" y="10" width="9" height="2" fill="#000"/><path d="M7 3L11 7M7 3L7 6M7 3L10 3" stroke="#F00" stroke-width="1.6"/></svg>
<div class="t" style="left:215px;top:302.69px;font-size:11px;color:#000">Ряды в:</div>
<svg style="left:292px;top:303px" width="14" height="34"><defs><linearGradient id="rg" x1="0" y1="0" x2="1" y2="1"><stop offset="0" stop-color="#DCDCD7"/><stop offset="1" stop-color="#FFFFFF"/></linearGradient></defs><circle cx="6.5" cy="6.5" r="6" fill="url(#rg)" stroke="#1C5180"/><circle cx="6.5" cy="25.5" r="6" fill="url(#rg)" stroke="#1C5180"/><circle cx="6.5" cy="25.5" r="2.6" fill="#21A121"/></svg>
<div class="t" style="left:309px;top:304.69px;font-size:11px;color:#000">стро<u>к</u>ах</div>
<div class="t" style="left:309px;top:323.69px;font-size:11px;color:#000">стол<u>б</u>цах</div>
<div class="a" style="left:307px;top:321px;width:51px;height:16px;border:1px dotted #000"></div>
<div class="a" style="left:289px;top:446px;width:73px;height:21px;border:1px solid #003C74;border-radius:3px;background:linear-gradient(#FFFFFF,#F4F4F0 60%,#E6E5DE 90%,#D6D0C5)"></div>
<div class="t" style="left:289.0px;top:450.69px;width:73px;text-align:center;font-size:11px;color:#000">Отмена</div>
<div class="a" style="left:370px;top:446px;width:72px;height:21px;border:1px solid #003C74;border-radius:3px;background:linear-gradient(#FFFFFF,#F4F4F0 60%,#E6E5DE 90%,#D6D0C5)"></div>
<div class="t" style="left:370.0px;top:450.69px;width:72px;text-align:center;font-size:11px;color:#000">&lt; <u>Н</u>азад</div>
<div class="a" style="left:445px;top:446px;width:73px;height:21px;border:1px solid #003C74;border-radius:3px;background:linear-gradient(#FFFFFF,#F4F4F0 60%,#E6E5DE 90%,#D6D0C5)"></div>
<div class="a" style="left:446px;top:447px;width:71px;height:19px;border:2px solid #A9C4F5;border-top-color:#CEE7FF;border-bottom-color:#6982EE;border-radius:2px"></div>
<div class="t" style="left:445.0px;top:450.69px;width:73px;text-align:center;font-size:11px;color:#000"><u>Д</u>алее &gt;</div>
<div class="a" style="left:526px;top:446px;width:73px;height:21px;border:1px solid #003C74;border-radius:3px;background:linear-gradient(#FFFFFF,#F4F4F0 60%,#E6E5DE 90%,#D6D0C5)"></div>
<div class="t" style="left:526.0px;top:450.69px;width:73px;text-align:center;font-size:11px;color:#000"><u>Г</u>отово</div>
<div class="a" style="left:0px;top:570px;width:800px;height:30px;background:linear-gradient(#3C81F3 0,#3F8CF3 2px,#2663E0 5px,#245DDB 50%,#2257D5 85%,#1A4BB8 100%)"></div>
<div class="a" style="left:0px;top:570px;width:96px;height:30px;border-radius:0 12px 12px 0;background:linear-gradient(#5A9C5A 0,#8CC48C 2px,#4AA64A 5px,#3C9A3C 30%,#379639 60%,#33903A 85%,#2A7A2A 100%);box-shadow:inset -2px 0 3px #1E5A1E"></div>
<svg style="left:10px;top:575px" width="22" height="20"><g transform="translate(0.5,0)"><path d="M3 1.5Q7 0.5 11.5 2L10.5 8.5Q6 7 2 8Z" fill="#F25A1D"/><path d="M12.5 2.5Q16 4 19.5 3L18.5 10Q15 11 11.5 9.5Z" fill="#86D40E"/><path d="M1.5 9Q5.5 8 9.5 9.5L8.5 16Q4.5 14.5 0.5 15.5Z" fill="#3A6FF0"/><path d="M10.5 10.5Q14 12 17.5 11L16.5 18Q13 19 9.5 17Z" fill="#FFCC00"/></g></svg>
<div class="t" style="left:35px;top:574px;font-size:19px;font-weight:bold;font-style:italic;color:#fff;text-shadow:1px 1px 1px #1A4A1A;transform:scaleX(0.88);transform-origin:0 0">пуск</div>
<svg style="left:108px;top:576px" width="16" height="18"><rect x="0.5" y="0.5" width="14" height="15" fill="#1030E0" stroke="#00C0F0"/><line x1="7.5" x2="7.5" y1="1" y2="15" stroke="#00E0FF"/><g stroke="#fff"><line x1="2" x2="6" y1="3.5" y2="3.5"/><line x1="2" x2="6" y1="6.5" y2="6.5"/><line x1="9" x2="13" y1="3.5" y2="3.5"/><line x1="9" x2="13" y1="6.5" y2="6.5"/></g><line x1="0" x2="15" y1="17.5" y2="17.5" stroke="#fff" stroke-dasharray="1 1"/></svg>
<svg style="left:131px;top:577px" width="16" height="16"><rect x="0.5" y="0.5" width="15" height="15" fill="#E8F0E8" stroke="#3C6A3C"/><path d="M3 3L13 13M13 3L3 13" stroke="#2E8B2E" stroke-width="3"/></svg>
<svg style="left:154px;top:577px" width="16" height="16"><rect x="0.5" y="0.5" width="15" height="15" fill="#F0F4FC" stroke="#3050A0"/><text x="2" y="13" font-family="Liberation Serif" font-style="italic" font-weight="bold" font-size="13" fill="#2040A0">W</text></svg>
<svg style="left:182px;top:575px" width="8" height="6"><path d="M0.5 0.5L3 3L0.5 5.5M4 0.5L6.5 3L4 5.5" stroke="#D0E0FF" fill="none"/></svg>
<div class="a" style="left:197px;top:573px;width:144px;height:24px;border-radius:3px;background:linear-gradient(#3C80F2,#3673EB 20%,#3168E4 80%,#2A5ED8);box-shadow:inset 1px 1px 0 #5A9AF8,inset -1px -1px 0 #1B44B0"></div>
<svg style="left:206px;top:578px" width="18" height="15"><path d="M0.5 2.5H6L7.5 4H15.5V13.5H0.5Z" fill="#E8C050" stroke="#A07A20"/><path d="M1 13.5L3.5 6.5H17L14.5 13.5Z" fill="#FCE7A0" stroke="#B08A30"/></svg>
<div class="t" style="left:227px;top:579.69px;font-size:11px;color:#fff">Лекции</div>
<div class="a" style="left:342px;top:573px;width:142px;height:24px;border-radius:3px;background:linear-gradient(#3C80F2,#3673EB 20%,#3168E4 80%,#2A5ED8);box-shadow:inset 1px 1px 0 #5A9AF8,inset -1px -1px 0 #1B44B0"></div>
<svg style="left:351px;top:577px" width="16" height="16"><rect x="0.5" y="0.5" width="15" height="15" fill="#F0F4FC" stroke="#3050A0"/><text x="2" y="13" font-family="Liberation Serif" font-style="italic" font-weight="bold" font-size="13" fill="#2040A0">W</text></svg>
<div class="t" style="left:371px;top:579.69px;font-size:11px;color:#fff"><span style="color:#FFC870;font-weight:bold">3</span> Microsoft Offic...</div>
<svg style="left:474px;top:583px" width="7" height="4"><path d="M0 0H6L3 3Z" fill="#fff"/></svg>
<div class="a" style="left:486px;top:572px;width:144px;height:26px;border-radius:3px;background:linear-gradient(#1D4FC4,#1E4EC0 50%,#1B4AB8);box-shadow:inset 1px 1px 1px #0E2E8C"></div>
<svg style="left:496px;top:577px" width="16" height="16"><rect x="0.5" y="0.5" width="15" height="15" fill="#E8F0E8" stroke="#3C6A3C"/><path d="M3 3L13 13M13 3L3 13" stroke="#2E8B2E" stroke-width="3"/></svg>
<div class="t" style="left:516px;top:579.69px;font-size:11px;color:#fff"><span style="color:#FFC870;font-weight:bold">2</span> Microsoft Offic...</div>
<svg style="left:622px;top:583px" width="7" height="4"><path d="M0 0H6L3 3Z" fill="#fff"/></svg>
<div class="a" style="left:638px;top:574px;width:20px;height:21px;background:#3B74E0"></div>
<div class="t" style="left:640px;top:579.69px;font-size:11px;color:#fff">EN</div>
<div class="a" style="left:672px;top:570px;width:128px;height:30px;background:linear-gradient(#19A0F0 0,#1290E8 3px,#0F8BE4 50%,#0C80DA 90%,#0A6CC0);border-left:1px solid #0B5ECC;box-shadow:inset 1px 0 0 #3FB8F8"></div>
<svg style="left:681px;top:578px" width="19" height="17"><path d="M9 1C14 1 17.5 3.5 17.5 7C17.5 10.5 14 12.5 9.5 12.5L6 15.5L6.5 12.5C3 12 0.5 10 0.5 7C0.5 3.5 4 1 9 1Z" fill="#0A1EF0" stroke="#5A2A90" stroke-width="0.8"/><path d="M8 4L12 7L8 10Z" fill="#fff"/><circle cx="4.5" cy="5" r="0.8" fill="#fff"/></svg>
<svg style="left:700px;top:576px" width="18" height="18"><circle cx="6.5" cy="7" r="5.8" fill="#8A8A8A" stroke="#3A3A3A" stroke-width="0.8"/><circle cx="5.8" cy="6.3" r="3.2" fill="#C8C8C8"/><circle cx="6" cy="6.5" r="1.6" fill="#6A6A90"/><path d="M9 16Q13 14 14 10M11 17Q15 15 16 11" stroke="#B8B0F8" fill="none" stroke-width="0.9"/></svg>
<svg style="left:718px;top:577px" width="17" height="17"><path d="M8.5 0.8L16.2 8.5L8.5 16.2L0.8 8.5Z" fill="#F4F4F4" stroke="#202020" stroke-width="1.2"/><path d="M12 3L4 9H8L5 14L13 7.5H9Z" fill="#F0A020" stroke="#B06000" stroke-width="0.5"/></svg>
<svg style="left:736px;top:576px" width="16" height="17"><path d="M2 9L12 4L15 9L5 14Z" fill="#8A8AA0" stroke="#404050" stroke-width="0.8"/><rect x="7" y="8" width="5" height="2.5" fill="#E0E0F0" transform="rotate(-25 9 9)"/><path d="M3 6L3 2L1 2L5 0L9 2L6.5 2L6.5 7Z" fill="#30C030" transform="rotate(-30 5 4)"/></svg>
<div class="t" style="left:762px;top:579.69px;font-size:11px;color:#fff">9:06</div>
</body></html>
